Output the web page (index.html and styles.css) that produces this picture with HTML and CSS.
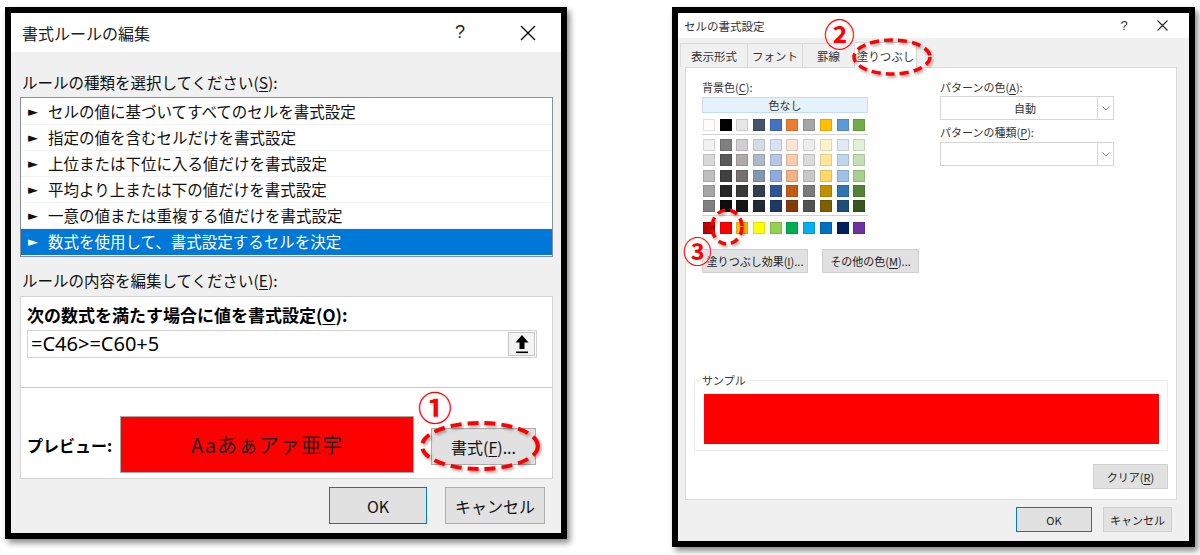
FILE: index.html
```html
<!DOCTYPE html>
<html lang="ja">
<head>
<meta charset="utf-8">
<title>書式ルールの編集</title>
<link rel="stylesheet" href="styles.css">
</head>
<body>
<div class="page">
  <section class="dlg dlg-rule">
    <div class="titlebar">
      <span class="title">書式ルールの編集</span>
      <span class="tb-help">?</span>
      <span class="tb-close"><svg width="18" height="18" viewBox="0 0 18 18"><path d="M2 2L16 16M16 2L2 16" stroke="#000" stroke-width="1.4" fill="none"/></svg></span>
    </div>
    <div class="body">
      <div class="lbl">ルールの種類を選択してください(<u>S</u>):</div>
      <ul class="rule-list">
        <li><span class="arr">►</span>セルの値に基づいてすべてのセルを書式設定</li>
        <li><span class="arr">►</span>指定の値を含むセルだけを書式設定</li>
        <li><span class="arr">►</span>上位または下位に入る値だけを書式設定</li>
        <li><span class="arr">►</span>平均より上または下の値だけを書式設定</li>
        <li><span class="arr">►</span>一意の値または重複する値だけを書式設定</li>
        <li class="sel"><span class="arr">►</span>数式を使用して、書式設定するセルを決定</li>
      </ul>
      <div class="lbl lbl2">ルールの内容を編集してください(<u>E</u>):</div>
      <div class="edit-panel">
        <div class="ep-top">
          <div class="ep-title">次の数式を満たす場合に値を書式設定(<u>O</u>):</div>
          <div class="formula">
            <span class="formula-text">=C46&gt;=C60+5</span>
            <span class="ref-btn"><svg width="16" height="20" viewBox="0 0 16 20"><path d="M8 1L1.5 8.5H5.5V15H10.5V8.5H14.5Z" fill="#000"/><rect x="2" y="17.5" width="12" height="1.6" fill="#000"/></svg></span>
          </div>
        </div>
        <div class="ep-bottom">
          <span class="pv-label">プレビュー:</span>
          <div class="pv-box">Aaあぁアァ亜宇</div>
          <button class="btn fmt-btn">書式(<u>F</u>)...</button>
        </div>
      </div>
      <div class="footer">
        <button class="btn btn-ok">OK</button>
        <button class="btn btn-cancel">キャンセル</button>
      </div>
    </div>
  </section>

  <section class="dlg dlg-cell">
    <div class="titlebar titlebar-sm">
      <span class="title">セルの書式設定</span>
      <span class="tb-help">?</span>
      <span class="tb-close"><svg width="13" height="13" viewBox="0 0 13 13"><path d="M1.5 1.5L11.5 11.5M11.5 1.5L1.5 11.5" stroke="#222" stroke-width="1.1" fill="none"/></svg></span>
    </div>
    <div class="body body-sm">
      <div class="tabs">
        <span class="tab t1">表示形式</span>
        <span class="tab t2">フォント</span>
        <span class="tab t3">罫線</span>
        <span class="tab t4 active">塗りつぶし</span>
      </div>
      <div class="panel">
        <div class="cols">
          <div class="col-left">
            <div class="slbl">背景色(<u>C</u>):</div>
            <div class="nocolor">色なし</div>
            <div class="sw-row">
              <i style="background:#ffffff"></i><i style="background:#000000"></i><i style="background:#e7e6e6"></i><i style="background:#44546a"></i><i style="background:#4472c4"></i><i style="background:#ed7d31"></i><i style="background:#a5a5a5"></i><i style="background:#ffc000"></i><i style="background:#5b9bd5"></i><i style="background:#70ad47"></i>
            </div>
            <div class="sw-sep"></div>
            <div class="sw-grid">
              <i style="background:#f2f2f2"></i><i style="background:#7f7f7f"></i><i style="background:#d0cece"></i><i style="background:#d6dce5"></i><i style="background:#dae3f3"></i><i style="background:#fbe5d6"></i><i style="background:#ededed"></i><i style="background:#fff2cc"></i><i style="background:#deebf7"></i><i style="background:#e2f0d9"></i>
              <i style="background:#d9d9d9"></i><i style="background:#595959"></i><i style="background:#aeaaaa"></i><i style="background:#adb9ca"></i><i style="background:#b4c7e7"></i><i style="background:#f8cbad"></i><i style="background:#dbdbdb"></i><i style="background:#ffe699"></i><i style="background:#bdd7ee"></i><i style="background:#c5e0b4"></i>
              <i style="background:#bfbfbf"></i><i style="background:#404040"></i><i style="background:#767171"></i><i style="background:#8497b0"></i><i style="background:#8faadc"></i><i style="background:#f4b183"></i><i style="background:#c9c9c9"></i><i style="background:#ffd966"></i><i style="background:#9dc3e6"></i><i style="background:#a9d18e"></i>
              <i style="background:#a6a6a6"></i><i style="background:#262626"></i><i style="background:#3b3838"></i><i style="background:#333f50"></i><i style="background:#2f5597"></i><i style="background:#c55a11"></i><i style="background:#7b7b7b"></i><i style="background:#bf9000"></i><i style="background:#2e75b6"></i><i style="background:#548235"></i>
              <i style="background:#808080"></i><i style="background:#0d0d0d"></i><i style="background:#171616"></i><i style="background:#222a35"></i><i style="background:#203864"></i><i style="background:#843c0c"></i><i style="background:#525252"></i><i style="background:#7f6000"></i><i style="background:#1f4e79"></i><i style="background:#385723"></i>
            </div>
            <div class="sw-sep"></div>
            <div class="sw-row">
              <i style="background:#c00000"></i><i style="background:#ff0000"></i><i style="background:#ffc000"></i><i style="background:#ffff00"></i><i style="background:#92d050"></i><i style="background:#00b050"></i><i style="background:#00b0f0"></i><i style="background:#0070c0"></i><i style="background:#002060"></i><i style="background:#7030a0"></i>
            </div>
            <div class="fx-btns">
              <button class="btn sbtn fx1">塗りつぶし効果(<u>I</u>)...</button>
              <button class="btn sbtn fx2">その他の色(<u>M</u>)...</button>
            </div>
          </div>
          <div class="col-right">
            <div class="slbl">パターンの色(<u>A</u>):</div>
            <div class="select"><span class="sel-val">自動</span><span class="sel-arr"><svg width="8" height="5" viewBox="0 0 8 5"><path d="M0.5 0.5L4 4L7.5 0.5" stroke="#888" fill="none"/></svg></span></div>
            <div class="slbl slbl2">パターンの種類(<u>P</u>):</div>
            <div class="select"><span class="sel-val"></span><span class="sel-arr"><svg width="8" height="5" viewBox="0 0 8 5"><path d="M0.5 0.5L4 4L7.5 0.5" stroke="#888" fill="none"/></svg></span></div>
          </div>
        </div>
        <div class="sample">
          <span class="sample-legend">サンプル</span>
          <div class="sample-fill"></div>
        </div>
        <div class="clear-row"><button class="btn sbtn clear-btn">クリア(<u>R</u>)</button></div>
      </div>
      <div class="footer footer-sm">
        <button class="btn sbtn ok-sm">OK</button>
        <button class="btn sbtn cancel-sm">キャンセル</button>
      </div>
    </div>
  </section>

  <svg class="marks" width="1200" height="555" viewBox="0 0 1200 555">
    <defs>
      <filter id="sh" x="-20%" y="-20%" width="140%" height="140%"><feDropShadow dx="1.5" dy="2" stdDeviation="1.5" flood-color="#000" flood-opacity="0.35"/></filter>
    </defs>
    <ellipse cx="480" cy="446" rx="58" ry="23" fill="none" stroke="#ff0000" stroke-width="4" stroke-dasharray="11 6" filter="url(#sh)"/>
    <ellipse cx="892" cy="57" rx="38" ry="17" fill="none" stroke="#ff0000" stroke-width="3.5" stroke-dasharray="9 5" filter="url(#sh)"/>
    <ellipse cx="727" cy="227" rx="15" ry="17" fill="none" stroke="#ff0000" stroke-width="3.5" stroke-dasharray="8 5" filter="url(#sh)"/>
  </svg>
  <span class="num n1">①</span>
  <span class="num n2">②</span>
  <span class="num n3">③</span>
</div>
</body>
</html>
```

FILE: styles.css
```css
* { box-sizing: border-box; margin: 0; padding: 0; }
html, body { width: 1200px; height: 555px; background: #fff; overflow: hidden; }
body { font-family: "Noto Sans CJK JP", "Noto Sans", sans-serif; color: #000; }
u { text-decoration: underline; text-underline-offset: 2px; }
button { font-family: inherit; padding: 0; white-space: nowrap; }

.page { position: relative; width: 1200px; height: 555px; display: flex; align-items: flex-start; padding: 7px 0 0 5px; }

.dlg { border: 6px solid #000; background: #f0f0f0; box-shadow: 3px 4px 6px rgba(0,0,0,.45); display: flex; flex-direction: column; }
.dlg-rule { width: 562px; height: 532px; }
.dlg-cell { width: 523px; height: 540px; margin-left: 105px; }

/* title bars */
.titlebar { height: 39px; background: #fff; display: flex; align-items: center; padding-left: 11px; padding-right: 18px; font-size: 16px; color: #222; flex: none; }
.titlebar .title { flex: 1; }
.tb-help { width: 30px; text-align: center; font-size: 18px; font-family: "Liberation Sans", sans-serif; }
.tb-close { width: 30px; display: flex; justify-content: center; margin-left: 38px; }

.titlebar-sm { height: 25px; padding-left: 6px; padding-right: 17px; font-size: 11.5px; color: #333; }
.titlebar-sm .tb-help { font-size: 13px; width: 20px; }
.titlebar-sm .tb-close { width: 20px; margin-left: 18px; }

/* left dialog */
.body { padding: 20px 8px 0 9px; font-size: 15.5px; display: flex; flex-direction: column; flex: 1; }
.lbl { line-height: 20px; height: 20px; padding-left: 2px; color: #111; }
.lbl2 { margin-top: 13px; }
.rule-list { list-style: none; margin-top: 5px; height: 160px; border: 1px solid #8a8f96; background: #fff; padding-top: 1px; }
.rule-list li { height: 26px; line-height: 25px; border-bottom: 1px solid #f2f2f2; display: flex; align-items: center; padding-left: 7px; color: #111; }
.rule-list li.sel { background: #0078d7; color: #fff; border-bottom-color: #0078d7; }
.arr { width: 20px; font-size: 13px; font-family: "DejaVu Sans", sans-serif; }

.edit-panel { margin-top: 6px; height: 183px; border: 1px solid #d4d4d4; background: #fff; display: flex; flex-direction: column; }
.ep-top { height: 91px; border-bottom: 1px solid #c8c8c8; padding: 8px 15px 0 6px; flex: none; }
.ep-title { font-weight: bold; font-size: 17px; line-height: 20px; }
.formula { margin-top: 5px; height: 28px; border: 1px solid #d2d2d2; display: flex; align-items: center; padding-left: 3px; }
.formula-text { font-family: "Noto Sans", sans-serif; font-size: 20px; line-height: 26px; }
.ref-btn { margin-left: auto; margin-right: 1px; width: 27px; height: 24px; background: #f4f4f4; border: 1px solid #c4c4c4; display: flex; align-items: center; justify-content: center; }

.ep-bottom { flex: 1; display: flex; align-items: flex-start; padding: 28px 0 0 6px; }
.pv-label { font-weight: bold; font-size: 16px; line-height: 20px; margin-top: 19px; width: 93px; }
.pv-box { width: 294px; height: 57px; background: #ff0000; border: 1px solid #a8a8a8; outline: 1px solid #fff; display: flex; align-items: center; justify-content: center; font-size: 20px; color: #222; letter-spacing: 1px; }
.btn { background: #e1e1e1; border: 1px solid #adadad; color: #111; display: flex; align-items: center; justify-content: center; flex: none; }
.fmt-btn { margin-left: 17px; margin-top: 12px; width: 105px; height: 37px; font-size: 16px; }

.footer { display: flex; justify-content: flex-end; gap: 18px; margin-top: 8px; padding-right: 8px; }
.btn-ok { width: 98px; height: 37px; font-size: 16px; border: 1px solid #0078d7; }
.btn-cancel { width: 100px; height: 37px; font-size: 16px; }

/* right dialog */
.body-sm { padding: 5px 12px 0 2px; font-size: 11px; color: #333; }
.tabs { display: flex; height: 24px; align-items: flex-end; }
.tab { height: 24px; border: 1px solid #dadada; border-bottom: none; border-right: none; display: flex; align-items: center; justify-content: center; font-size: 11.5px; color: #333; background: #f0f0f0; }
.t1 { width: 67px; }
.t2 { width: 55px; }
.t3 { width: 53px; border-right: 1px solid #dadada; }
.t4 { width: 62px; }
.tab.active { background: #fff; height: 26px; margin-bottom: -1px; position: relative; border: 1px solid #d4d4d4; border-bottom: none; border-left: none; }
.panel { margin-left: 5px; height: 433px; width: 492px; background: #fff; border: 1px solid #d9d9d9; padding: 11px 0 0 16px; display: flex; flex-direction: column; }
.cols { display: flex; }
.col-left { width: 166px; flex: none; }
.slbl { height: 16px; line-height: 16px; font-size: 11px; color: #333; }
.nocolor { margin-top: 2px; height: 16px; background: #e5f1fb; border: 1px solid #c5ddf2; text-align: center; line-height: 14px; font-size: 11px; }
.sw-row, .sw-grid { display: grid; grid-template-columns: repeat(10, 12px); column-gap: 4.7px; row-gap: 3.3px; padding-left: 1px; }
.sw-row { margin-top: 6px; }
.sw-row i, .sw-grid i { display: block; width: 12px; height: 12px; border: 1px solid rgba(0,0,0,.12); }
.sw-sep { height: 1px; background: #d4d4d4; margin: 3px 0 4px; }
.fx-btns { display: flex; gap: 14px; margin-top: 15px; margin-left: 0; width: 230px; }
.sbtn { height: 24px; font-size: 11px; color: #222; background: #e1e1e1; border: 1px solid #cfcfcf; }
.fx1 { width: 106px; }
.fx2 { width: 97px; }

.col-right { margin-left: 72px; width: 174px; flex: none; }
.select { height: 24px; border: 1px solid #d5d5d5; display: flex; background: #fff; }
.sel-val { flex: 1; text-align: center; line-height: 22px; font-size: 11px; padding-left: 12px; }
.sel-arr { width: 16px; border-left: 1px solid #d5d5d5; display: flex; align-items: center; justify-content: center; }
.slbl2 { margin-top: 4px; margin-bottom: 2px; }
.col-right .slbl:first-child { margin-bottom: 1px; }

.sample { position: relative; margin: 107px 0 0 -8px; width: 474px; height: 71px; border: 1px solid #ececec; padding: 13px 0 0 9px; }
.sample-legend { position: absolute; left: 5px; top: -8px; background: #fff; padding: 0 2px; font-size: 11px; line-height: 14px; color: #333; }
.sample-fill { width: 455px; height: 50px; background: #ff0000; }
.clear-row { display: flex; justify-content: flex-end; width: 474px; margin: 13px 0 0 -8px; }
.clear-btn { width: 75px; height: 25px; }

.footer-sm { gap: 11px; margin-top: 7px; padding-right: 5px; }
.ok-sm { width: 76px; height: 25px; border-color: #0078d7; }
.cancel-sm { width: 69px; height: 25px; }

/* annotations */
.marks { position: absolute; left: 0; top: 0; pointer-events: none; }
.num { position: absolute; color: #ff0000; font-family: "Noto Sans CJK JP", sans-serif; font-weight: 700; line-height: 1; text-shadow: 0 0 2px #fff, 0 0 2px #fff; }
.n1 { left: 418px; top: 390px; font-size: 34px; }
.n2 { left: 824px; top: 17px; font-size: 31px; }
.n3 { left: 683px; top: 236px; font-size: 29px; }
```
